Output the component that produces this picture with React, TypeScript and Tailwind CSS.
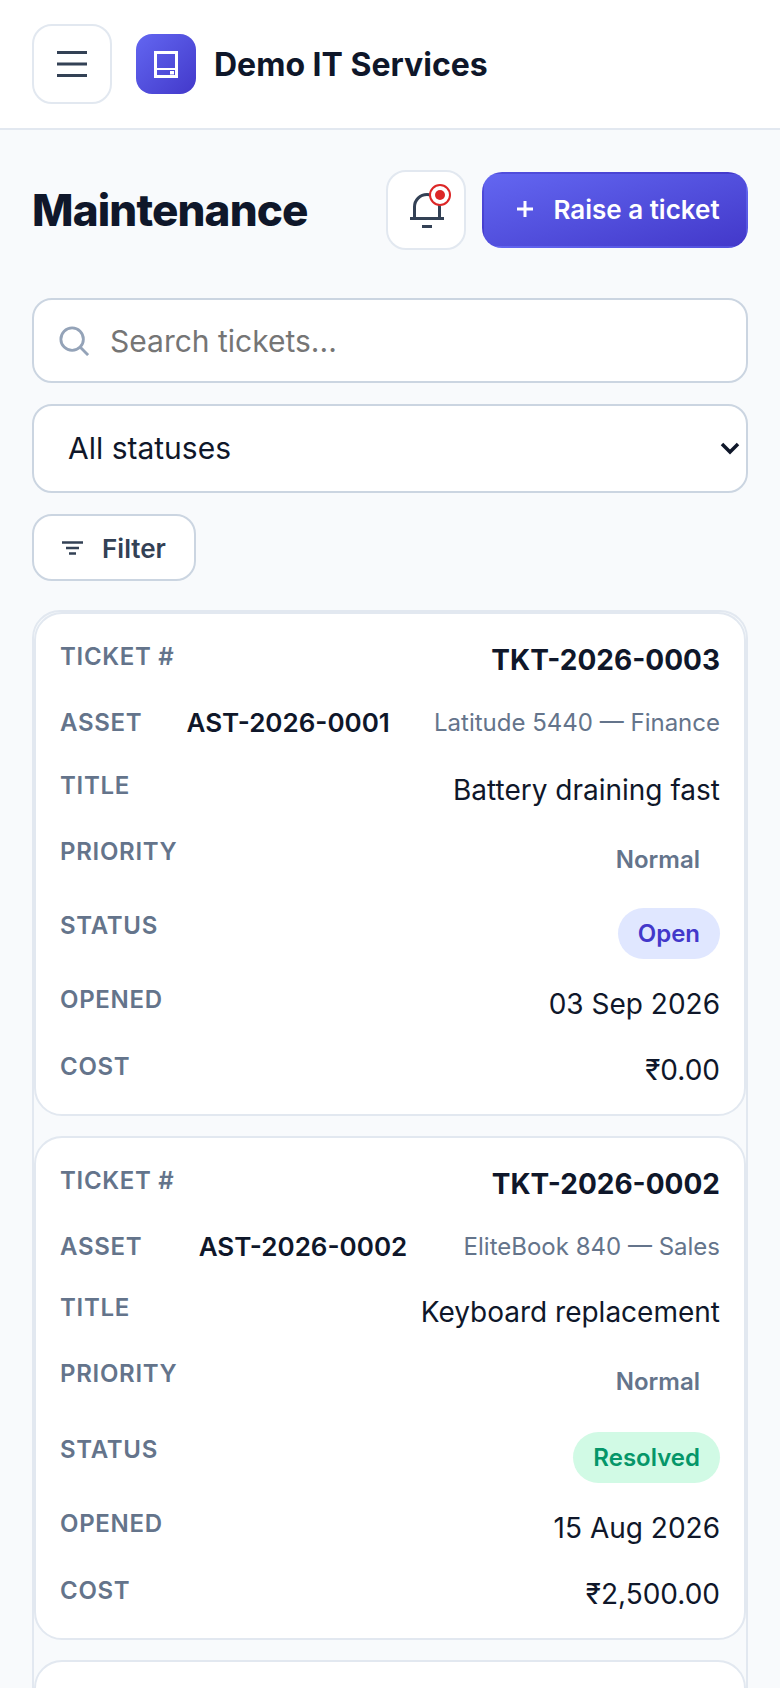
import { useState } from 'react';

const FONT = 'font-["Inter","Noto_Sans",sans-serif]';

interface Ticket {
  id: string;
  asset: string;
  assetName: string;
  title: string;
  opened: string;
  cost: string;
  status: 'Open' | 'Resolved';
  assetRow: string;
  priorityRow: string;
}

const tickets: Ticket[] = [
  {
    id: 'TKT-2026-0003',
    asset: 'AST-2026-0001',
    assetName: 'Latitude 5440 — Finance',
    title: 'Battery draining fast',
    opened: '03 Sep 2026',
    cost: '₹0.00',
    status: 'Open',
    assetRow: 'h-[63px]',
    priorityRow: 'h-[74px]',
  },
  {
    id: 'TKT-2026-0002',
    asset: 'AST-2026-0002',
    assetName: 'EliteBook 840 — Sales',
    title: 'Keyboard replacement',
    opened: '15 Aug 2026',
    cost: '₹2,500.00',
    status: 'Resolved',
    assetRow: 'h-[61px]',
    priorityRow: 'h-[76px]',
  },
];

function Row({ label, className, children }: { label: string; className: string; children: React.ReactNode }) {
  return (
    <div className={`flex items-start justify-between ${className}`}>
      <span className="shrink-0 pt-[7px] text-[24px] leading-[30px] font-semibold tracking-[0.7px] text-[#64748b] uppercase">
        {label}
      </span>
      {children}
    </div>
  );
}

function TicketCard({ ticket }: { ticket: Ticket }) {
  return (
    <article className="rounded-[28px] border-2 border-[#e2e8f0] bg-white px-[24px] pt-[21px] pb-[19px]">
      <Row label="Ticket #" className="h-[66px]">
        <span className="pt-[7px] text-[28px] leading-[36px] font-bold text-[#0f172a]">{ticket.id}</span>
      </Row>
      <Row label="Asset" className={ticket.assetRow}>
        <span className="pt-[6px] text-[26px] leading-[32px] font-semibold text-[#0f172a]">{ticket.asset}</span>
        <span className="pt-[6px] text-[24px] leading-[32px] text-[#64748b]">{ticket.assetName}</span>
      </Row>
      <Row label="Title" className="h-[66px]">
        <span className="pt-[8px] text-[28px] leading-[36px] text-[#0f172a]">{ticket.title}</span>
      </Row>
      <Row label="Priority" className={ticket.priorityRow}>
        <span className="pt-[14px] pr-[20px] text-[24px] leading-[32px] font-semibold text-[#64748b]">Normal</span>
      </Row>
      <Row label="Status" className="h-[74px]">
        {ticket.status === 'Open' ? (
          <span className="mt-[4px] rounded-full bg-[#e0e7ff] px-[20px] pt-[10px] pb-[9px] text-[24px] leading-[32px] font-semibold text-[#4338ca]">
            Open
          </span>
        ) : (
          <span className="mt-[4px] rounded-full bg-[#d1fae5] px-[20px] pt-[10px] pb-[9px] text-[24px] leading-[32px] font-semibold text-[#059669]">
            Resolved
          </span>
        )}
      </Row>
      <Row label="Opened" className="h-[67px]">
        <span className="pt-[8px] text-[28px] leading-[36px] text-[#0f172a]">{ticket.opened}</span>
      </Row>
      <Row label="Cost" className="h-[50px]">
        <span className="pt-[7px] text-[28px] leading-[36px] text-[#0f172a]">{ticket.cost}</span>
      </Row>
    </article>
  );
}

export default function App() {
  const [query, setQuery] = useState('');

  return (
    <div className={`h-[1688px] overflow-hidden bg-[#f8fafc] ${FONT}`}>
      <header className="flex h-[130px] items-center gap-[24px] border-b-2 border-[#e2e8f0] bg-white px-[32px]">
        <button type="button" className="flex h-[80px] w-[80px] items-center justify-center rounded-[20px] border-2 border-[#e2e8f0] bg-white">
          <svg width="30" height="26" viewBox="0 0 30 26" fill="none" stroke="#334155" strokeWidth="3">
            <path d="M0 1.500h30M0 13h30M0 24.500h30" />
          </svg>
        </button>
        <div className="flex items-center gap-[18px]">
          <div className="flex h-[60px] w-[60px] items-center justify-center rounded-[16px] bg-gradient-to-br from-[#6366f1] to-[#4338ca]">
            <svg width="24" height="27" viewBox="0 0 24 27" fill="none">
              <rect x="1.500" y="1.500" width="21" height="24" stroke="#fff" strokeWidth="3" />
              <path d="M2 18h20" stroke="#fff" strokeWidth="2" />
              <rect x="16" y="20" width="4" height="3.500" fill="#fff" />
            </svg>
          </div>
          <span className="pt-[2px] text-[32px] leading-none font-bold text-[#0f172a]">Demo IT Services</span>
        </div>
      </header>

      <main className="px-[32px] pt-[40px]">
        <div className="flex items-center justify-between">
          <h1 className="text-[44px] leading-none font-extrabold tracking-[-0.85px] text-[#0f172a]">Maintenance</h1>
          <div className="flex items-center gap-[16px]">
            <button type="button" className="relative flex h-[80px] w-[80px] items-center justify-center rounded-[20px] border-2 border-[#e2e8f0] bg-white pl-[2px]">
              <svg width="34" height="35" viewBox="0 0 34 35" fill="none" stroke="#334155" strokeWidth="3">
                <path d="M4.500 25V14a12.500 12.500 0 0 1 25 0v11M0 25.500h34M12 33.500h10" />
              </svg>
              <span className="absolute top-[12px] right-[13px] flex h-[22px] w-[22px] items-center justify-center rounded-full border-2 border-[#dc2626] bg-white">
                <span className="h-[10px] w-[10px] rounded-full bg-[#dc2626]" />
              </span>
            </button>
            <button type="button" className="flex h-[76px] w-[266px] items-center justify-center gap-[19px] rounded-[20px] border-2 border-transparent bg-gradient-to-br from-[#6366f1] to-[#4338ca] pb-[2px] pl-[6px] text-[26px] font-semibold text-white">
              <svg width="18" height="18" viewBox="0 0 18 18" stroke="#fff" strokeWidth="3">
                <path d="M9 1v16M1 9h16" />
              </svg>
              Raise a ticket
            </button>
          </div>
        </div>

        <div className="mt-[48px] flex h-[85px] items-center gap-[21px] rounded-[20px] border-2 border-[#cbd5e1] bg-white px-[25px]">
          <svg width="30" height="30" viewBox="0 0 32 32" fill="none" stroke="#94a3b8" strokeWidth="3" className="shrink-0">
            <circle cx="14" cy="14" r="12" />
            <path d="M23 23l8 8" />
          </svg>
          <input
            value={query}
            onChange={(e) => setQuery(e.target.value)}
            placeholder="Search tickets..."
            className="w-full bg-transparent pt-[1px] text-[30px] text-[#0f172a] outline-none placeholder:text-[#757575]"
          />
        </div>

        <div className="relative mt-[21px]">
          <select className="block h-[89px] w-full appearance-none rounded-[20px] border-2 border-[#cbd5e1] bg-white px-[34px] text-[30px] text-[#0f172a]">
            <option>All statuses</option>
          </select>
          <svg width="20" height="14" viewBox="0 0 20 14" fill="none" stroke="#0f172a" strokeWidth="3.500" className="pointer-events-none absolute top-[37px] right-[8px]">
            <path d="M2 3l8 8 8-8" />
          </svg>
        </div>

        <button type="button" className="mt-[21px] flex h-[67px] w-[164px] items-center justify-center gap-[19px] rounded-[20px] border-2 border-[#cbd5e1] bg-white pt-[1px] text-[26px] font-semibold text-[#334155]">
          <svg width="21" height="14" viewBox="0 0 21 14" stroke="#334155" strokeWidth="2.600">
            <path d="M0 1.500h21M4 7h13M7 12.500h7" />
          </svg>
          Filter
        </button>

        <div className="mt-[29px] flex flex-col gap-[20px] rounded-[28px] border-2 border-[#e2e8f0]">
          {tickets.map((ticket) => (
            <TicketCard key={ticket.id} ticket={ticket} />
          ))}
          <div className="h-[300px] rounded-[28px] border-2 border-[#e2e8f0] bg-white" />
        </div>
      </main>
    </div>
  );
}
